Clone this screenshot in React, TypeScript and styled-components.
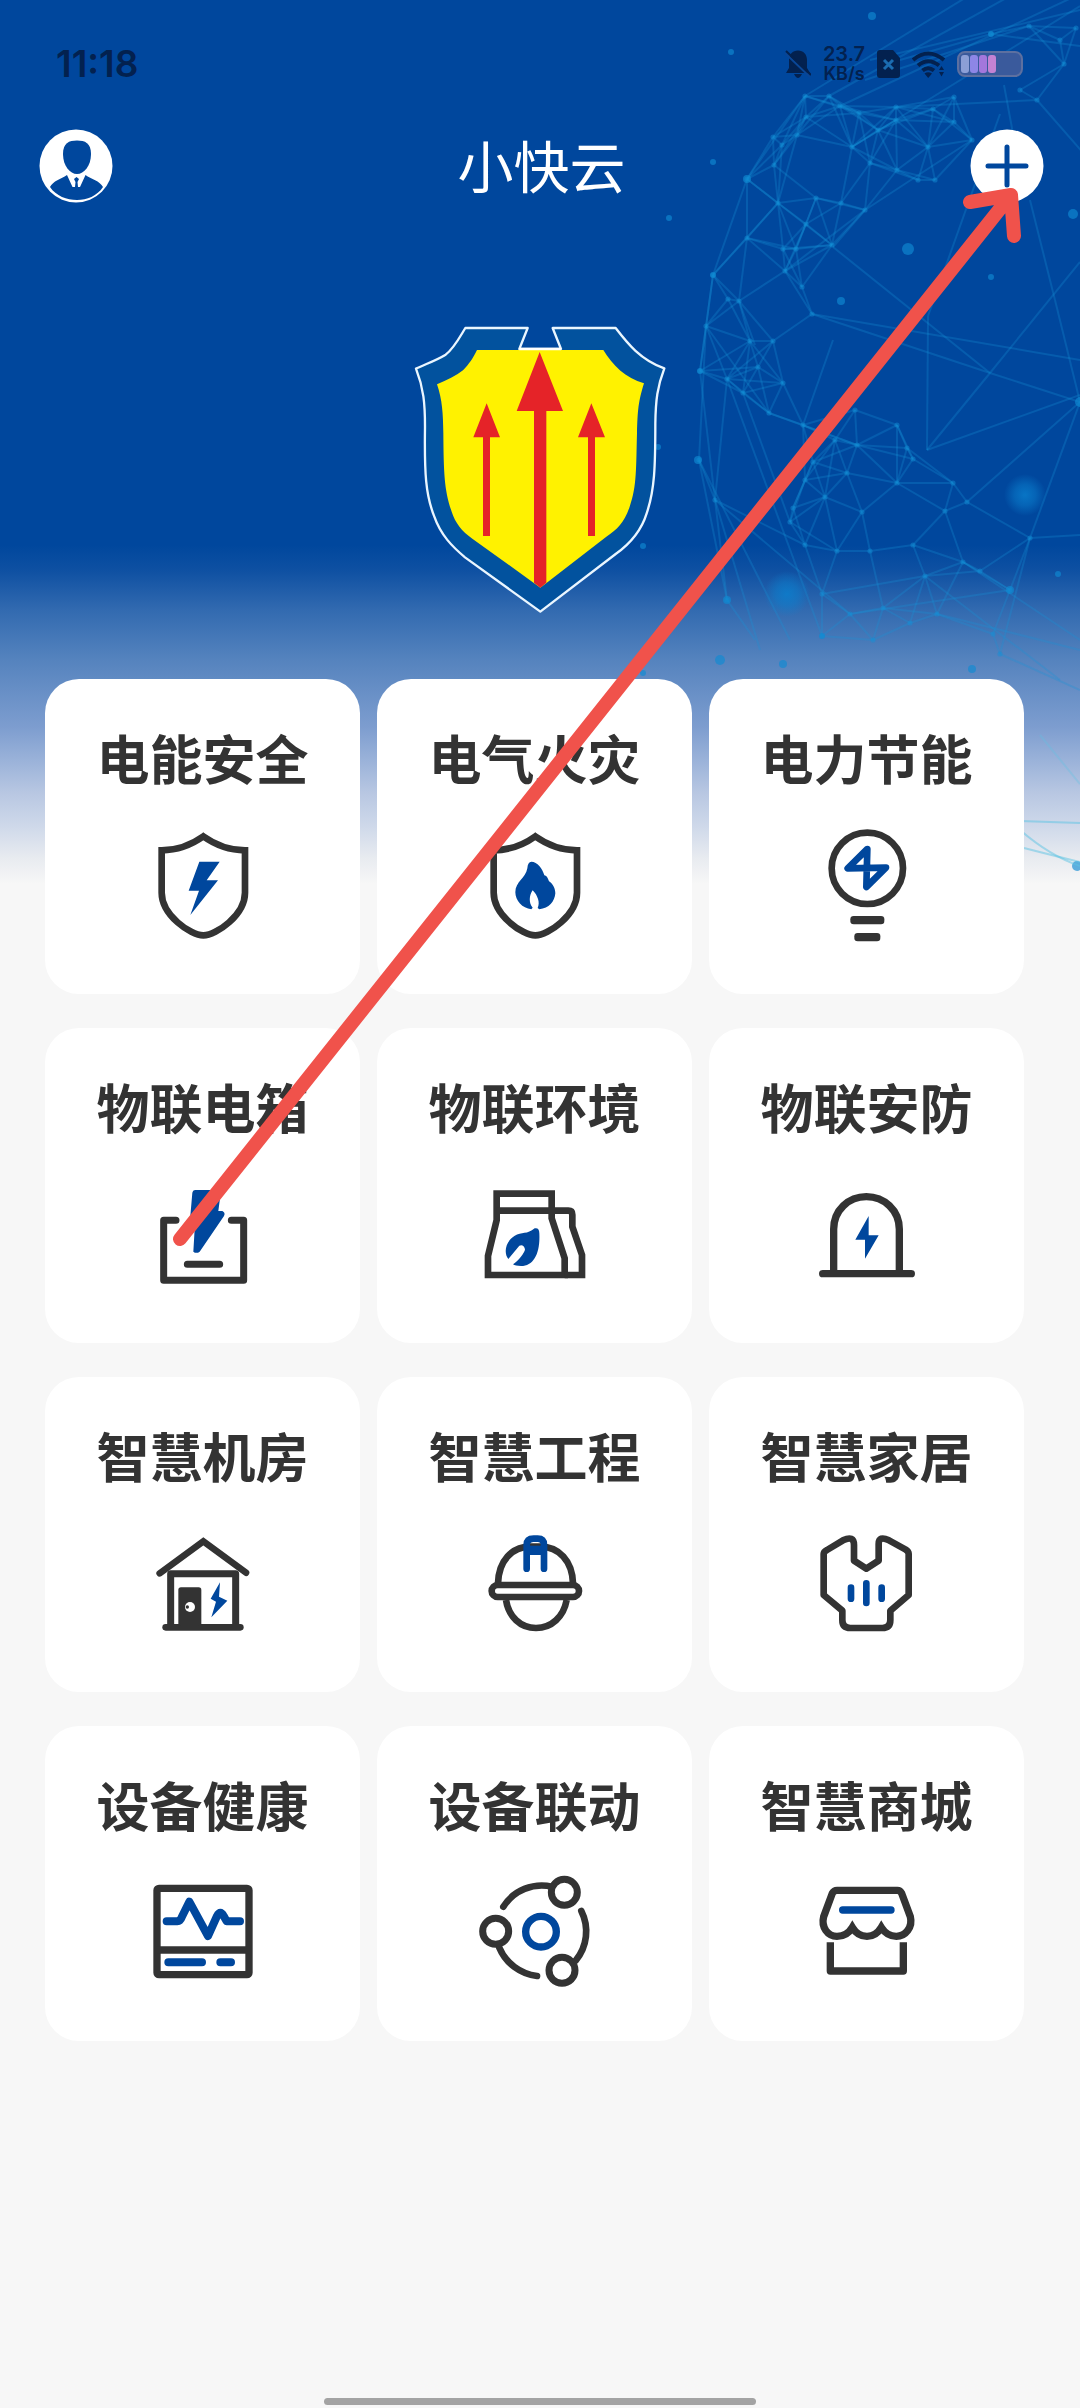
import React from "react";
import styled, { createGlobalStyle } from "styled-components";

const BLUE = "#00479d";
const INK = "#333333";
const STATUS = "#03214f";

const GlobalStyle = createGlobalStyle`
  *, *::before, *::after { box-sizing: border-box; }
  body {
    margin: 0;
    background: #f7f7f7;
    font-family: "Noto Sans CJK SC", "Noto Sans", sans-serif;
  }
  button {
    margin: 0;
    padding: 0;
    border: 0;
    background: none;
    font: inherit;
    color: inherit;
    cursor: pointer;
  }
  svg { display: block; }
`;

const Page = styled.div`
  position: relative;
  display: grid;
  min-height: 100vh;
  overflow: hidden;
  background: #f7f7f7;
`;

const Backdrop = styled.div`
  grid-area: 1 / 1;
  align-self: start;
  display: flex;
  justify-content: flex-end;
  height: 884px;
  background: linear-gradient(
    to bottom,
    ${BLUE} 0,
    ${BLUE} 545px,
    #0e50a2 570px,
    #326ab0 610px,
    #5583be 660px,
    #7d9dcf 727px,
    #9ab2d9 760px,
    #b8c7e2 793px,
    #cfd9ea 827px,
    #e8ebf0 858px,
    #f7f7f7 884px
  );
`;

const Screen = styled.main`
  grid-area: 1 / 1;
  z-index: 1;
  display: flex;
  flex-direction: column;
  min-width: 0;
`;

const StatusBar = styled.div`
  display: flex;
  align-items: center;
  justify-content: space-between;
  height: 128px;
  padding: 0 57px 0 56px;
  font-family: Inter, "Noto Sans", sans-serif;
  color: ${STATUS};
`;

const Clock = styled.time`
  font-size: 37px;
  line-height: 44px;
  font-weight: 600;
`;

const StatusItems = styled.div`
  display: flex;
  align-items: center;
  gap: 12px;
`;

const NetSpeed = styled.div`
  display: flex;
  flex-direction: column;
  align-items: center;
  width: 42px;
  font-size: 18px;
  line-height: 20px;
  font-weight: 600;
`;

const SpeedValue = styled.span`
  font-size: 20px;
`;

const Battery = styled.div`
  display: flex;
  gap: 1px;
  width: 66px;
  height: 26px;
  padding: 2px;
  border: 2px solid #5d70a0;
  border-radius: 8px;
  background: #3a5a9c;
`;

const Cell = styled.span<{ $tone: string }>`
  width: 8px;
  border-radius: 3px;
  background: ${(p) => p.$tone};
`;

const Header = styled.header`
  display: flex;
  align-items: center;
  justify-content: space-between;
  height: 76px;
  padding: 0 36px 0 39px;
`;

const Title = styled.h1`
  margin: 0;
  padding-bottom: 4px;
  font-size: 56px;
  line-height: 72px;
  font-weight: 400;
  color: #ffffff;
`;

const RoundButton = styled.button`
  display: grid;
  place-items: center;
  width: 74px;
  height: 74px;
  border-radius: 50%;
`;

const Emblem = styled.div`
  display: flex;
  justify-content: center;
  padding: 121px 0 65px;
`;

const Grid = styled.section`
  display: grid;
  grid-template-columns: repeat(3, 1fr);
  gap: 34px 17px;
  padding: 0 56px 0 45px;
`;

const Card = styled.button`
  display: flex;
  flex-direction: column;
  align-items: center;
  gap: 38px;
  padding: 49px 0 50px;
  border-radius: 34px;
  background: #ffffff;
`;

const CardLabel = styled.span`
  font-size: 53px;
  line-height: 58px;
  font-weight: 700;
  color: ${INK};
  white-space: nowrap;
`;

const HomeIndicator = styled.div`
  width: 40%;
  height: 7px;
  margin: auto auto 3px;
  border-radius: 4px;
  background: #a3a3a3;
`;

const Pointer = styled.svg`
  position: absolute;
  top: 0;
  left: 0;
  z-index: 2;
  width: 100%;
  pointer-events: none;
`;

/* ---------- network globe ---------- */

type Pt = [number, number];

const NODES: Pt[] = [
  [805, 96], [829, 96], [840, 106], [806, 117], [773, 137], [797, 135], [782, 145],
  [747, 179], [774, 165], [852, 147], [859, 113], [896, 120], [896, 107], [878, 130],
  [870, 163], [897, 170], [928, 147], [933, 109], [954, 97], [954, 122], [972, 140],
  [778, 203], [816, 198], [841, 203], [865, 210], [806, 224], [747, 238], [783, 249],
  [796, 249], [832, 245], [918, 180], [935, 180], [713, 275], [728, 299], [706, 326],
  [739, 301], [785, 271], [802, 287], [812, 314], [700, 371], [727, 379], [743, 393],
  [750, 341], [773, 341], [783, 383], [758, 367], [769, 413], [803, 425], [699, 460],
  [715, 500], [727, 600], [790, 522], [793, 508], [813, 462], [847, 473], [857, 445],
  [855, 410], [897, 425], [907, 448], [913, 459], [897, 483], [953, 483], [945, 511],
  [967, 502], [913, 545], [925, 576], [963, 562], [980, 571], [870, 551], [837, 551],
  [805, 545], [822, 594], [850, 614], [822, 636], [883, 608], [910, 623], [937, 614],
  [993, 634], [1010, 590], [1030, 538], [991, 34], [1029, 26], [1060, 40], [1020, 90],
  [1037, 100], [1064, 64], [1076, 28], [1000, 654], [873, 640], [825, 497], [862, 512],
  [835, 440], [805, 480],
];

const LONG_LINES: [Pt, Pt][] = [
  [[805, 96], [965, -2]], [[829, 96], [1010, -4]], [[840, 106], [1080, -6]],
  [[870, 60], [1080, 10]], [[900, 60], [991, 34]], [[991, 34], [1080, 46]],
  [[865, 80], [1029, 26]], [[852, 147], [1080, 6]], [[896, 107], [1037, 100]],
  [[865, 210], [972, 140]], [[833, 247], [865, 210]], [[785, 271], [865, 210]],
  [[833, 247], [990, 373]], [[812, 314], [990, 373]], [[812, 314], [1080, 360]],
  [[990, 373], [1080, 402]], [[990, 373], [1080, 262]], [[990, 373], [927, 450]],
  [[928, 316], [927, 450]], [[928, 316], [1000, 114]], [[1037, 100], [1085, 155]],
  [[1004, 85], [1016, 150]], [[1030, 200], [1055, 300]], [[1055, 300], [1080, 402]],
  [[1080, 402], [967, 502]], [[1080, 402], [1030, 538]], [[927, 450], [1080, 395]],
  [[967, 502], [1030, 538]], [[1030, 538], [1080, 535]], [[1030, 538], [1000, 654]],
  [[706, 326], [699, 460]], [[706, 326], [769, 413]], [[700, 371], [715, 500]],
  [[699, 460], [727, 600]], [[715, 500], [727, 600]], [[715, 500], [850, 614]],
  [[715, 500], [805, 545]], [[727, 379], [715, 500]], [[743, 393], [790, 522]],
  [[727, 600], [755, 640]], [[727, 379], [822, 636]], [[803, 425], [833, 340]],
  [[769, 413], [857, 445]], [[739, 301], [747, 238]], [[713, 275], [747, 179]],
  [[739, 301], [755, 345]], [[747, 179], [805, 96]], [[713, 275], [700, 371]],
  [[747, 179], [832, 245]], [[778, 203], [797, 135]], [[713, 275], [778, 203]],
  [[699, 460], [790, 640]], [[715, 500], [760, 650]], [[850, 614], [1010, 590]],
  [[822, 594], [925, 576]], [[937, 614], [1080, 650]], [[925, 576], [1060, 680]],
  [[1000, 654], [1080, 690]], [[963, 562], [1080, 640]],
];

const DOTS: [number, number, number][] = [
  [872, 16, 4], [731, 52, 3], [713, 162, 3], [669, 218, 3], [908, 249, 6],
  [1073, 214, 5], [991, 277, 3], [841, 301, 4], [658, 447, 3], [643, 546, 3],
  [698, 460, 4], [727, 600, 4], [720, 660, 5], [1058, 574, 3], [747, 179, 4],
  [1010, 590, 4], [822, 636, 3], [783, 664, 4], [972, 669, 4], [643, 673, 3],
  [1077, 866, 5], [713, 275, 3], [700, 371, 3], [1080, 402, 5], [991, 34, 3],
];

const SHORT_LINES: [Pt, Pt][] = NODES.flatMap((a, i) =>
  NODES.slice(i + 1)
    .filter((b) => Math.hypot(a[0] - b[0], a[1] - b[1]) < 60)
    .map((b): [Pt, Pt] => [a, b])
);

const Globe = () => (
  <svg width="460" height="884" viewBox="620 0 460 884" aria-hidden="true">
    <defs>
      <radialGradient id="glow">
        <stop offset="0" stopColor="#0a80cf" stopOpacity="0.8" />
        <stop offset="0.5" stopColor="#0a80cf" stopOpacity="0.5" />
        <stop offset="1" stopColor="#0a80cf" stopOpacity="0" />
      </radialGradient>
    </defs>
    <g stroke="#1592d6" strokeWidth="2" strokeOpacity="0.28">
      {[...SHORT_LINES, ...LONG_LINES].map(([a, b], i) => (
        <line key={i} x1={a[0]} y1={a[1]} x2={b[0]} y2={b[1]} />
      ))}
    </g>
    <g fill="#1390d6" fillOpacity="0.45">
      {NODES.map(([x, y], i) => (
        <circle key={i} cx={x} cy={y} r="2.6" />
      ))}
    </g>
    <g fill="#0f8bd2" fillOpacity="0.65">
      {DOTS.map(([x, y, r], i) => (
        <circle key={i} cx={x} cy={y} r={r} />
      ))}
    </g>
    <circle cx="1025" cy="495" r="21" fill="url(#glow)" />
    <circle cx="787" cy="594" r="23" fill="url(#glow)" />
    <g fill="none" stroke="#5cc4e4" strokeOpacity="0.5" strokeWidth="2">
      <path d="M1020 821 L1080 823" />
      <path d="M1020 830 Q1050 856 1080 866" />
      <path d="M1024 848 Q1055 856 1080 862" />
      <path d="M1040 735 L1080 784" strokeOpacity="0.3" />
    </g>
  </svg>
);

/* ---------- emblem ---------- */

const Shield = () => (
  <svg width="252" height="289" viewBox="75 75 756 867" role="img" aria-label="小快云">
    <path
      d="M229 84 H416 L391 147 H516 L491 84 H680 C715 130 755 180 826 205 C805 260 800 300 799 370 C799 500 797 570 773 640 C757 692 725 730 680 762 L454 935 L228 772 C190 740 155 705 136 650 C110 585 106 520 108 380 C108 310 104 265 81 206 C110 192 140 182 170 164 C195 145 210 115 229 84 Z"
      fill="#02529e"
      stroke="#eaf6ff"
      strokeWidth="7"
      strokeLinejoin="round"
    />
    <path
      d="M264 150 H643 C670 195 710 235 765 250 C748 305 746 330 744 400 C741 500 744 560 722 620 C706 668 685 688 652 710 L454 863 L250 716 C218 692 200 672 187 632 C166 570 164 520 163 400 C162 340 160 300 144 253 C175 240 200 228 222 211 C240 192 252 175 264 150 Z"
      fill="#fff200"
    />
    <path d="M391 147 H516" stroke="#ffffff" strokeWidth="7" />
    <path d="M452 156 L522 333 H472 V848 L454 863 L435 848 V333 H383 Z" fill="#e52328" />
    <path d="M293 310 L333 412 H303 V708 H282 V412 H253 Z" fill="#e52328" />
    <path d="M607 310 L648 412 H618 V708 H597 V412 H567 Z" fill="#e52328" />
  </svg>
);

/* ---------- status and header icons ---------- */

const BellOff = () => (
  <svg width="26" height="30" viewBox="0 0 26 30" aria-hidden="true">
    <path d="M13 1.500 C18.500 1.500 22 5.500 22 11 V19 L25 24 H1 L4 19 V11 C4 5.500 7.500 1.500 13 1.500 Z M9 25 H17 Q15 29 13 29 T9 25 Z" fill={STATUS} />
    <path d="M0 4 L25 28" stroke="#0a4696" strokeWidth="2" />
    <path d="M1 2 L26 26" stroke={STATUS} strokeWidth="2" />
  </svg>
);

const SimOff = () => (
  <svg width="23" height="28" viewBox="0 0 23 28" aria-hidden="true">
    <path d="M3 0 H16 L23 8 V25 Q23 28 20 28 H3 Q0 28 0 25 V3 Q0 0 3 0 Z" fill={STATUS} />
    <path d="M7 10 L16 19 M16 10 L7 19" stroke="#1b6cb0" strokeWidth="3" />
  </svg>
);

const Wifi = () => (
  <svg width="33" height="27" viewBox="0 0 33 27" aria-hidden="true">
    <g fill="none" stroke={STATUS} strokeWidth="4">
      <path d="M1 9 Q16 -4 32 9" />
      <path d="M6 14.500 Q16 6 27 14.500" />
      <path d="M10.500 19.500 Q16 15 22 19.500" />
    </g>
    <path d="M12.500 22.500 Q16 20 20 22.500 L16.200 27 Z" fill={STATUS} />
    <path d="M27 19 L29.500 15 L32 19 Z M27 21 L29.500 25.500 L32 21 Z" fill={STATUS} />
  </svg>
);

const Avatar = () => (
  <svg width="74" height="74" viewBox="0 0 74 74" aria-hidden="true">
    <circle cx="37" cy="37" r="36.500" fill="#ffffff" />
    <path
      d="M38 11.500 C46 11.500 52 14 52 25 C52 37 45 45 38 45 S24 37 24 25 C24 14 30 11.500 38 11.500 Z"
      fill={BLUE}
    />
    <path
      d="M11 58 C14 52 22 50 28 46 L33.500 58 L36 58 L36.500 53 L35 50 L37.500 48 L40 50 L38.500 53 L39 58 L41 58 L46.500 46 C52 50 61 52 64 58 C58 67 48 71 38 71 S17 67 11 58 Z"
      fill={BLUE}
    />
  </svg>
);

const Plus = () => (
  <svg width="74" height="74" viewBox="0 0 74 74" aria-hidden="true">
    <circle cx="37" cy="37" r="36.500" fill="#ffffff" />
    <path d="M18 37 H56 M37 18 V56" stroke={BLUE} strokeWidth="5" strokeLinecap="round" />
  </svg>
);

/* ---------- module icons ---------- */

const ModuleIcon = ({ origin, children }: { origin: string; children: React.ReactNode }) => (
  <svg
    width="120"
    height="120"
    viewBox={`${origin} 360 360`}
    fill="none"
    stroke={INK}
    strokeWidth="20"
    aria-hidden="true"
  >
    {children}
  </svg>
);

const guard = "M519 529 Q462 570 394 571 V698 C394 765 480 826 519 826 S644 765 644 698 V571 Q576 570 519 529 Z";

const icons = {
  safety: (
    <ModuleIcon origin="338 492">
      <path d={guard} />
      <path d="M507 605 H568 L529 661 H563 L480 765 L506 692 H475 Z" fill={BLUE} stroke="none" />
    </ModuleIcon>
  ),
  fire: (
    <ModuleIcon origin="338 492">
      <path d={guard} />
      <path
        d="M507 605 C525 605 540 625 546 646 C552 646 556 652 560 664 C572 672 579 685 579 700 C577 725 560 745 531 748 L526 744 C534 728 526 706 511 691 C500 706 499 730 511 743 L507 748 C480 745 459 722 459 697 C459 665 490 655 495 625 C496 612 500 605 507 605 Z"
        fill={BLUE}
        stroke="none"
      />
    </ModuleIcon>
  ),
  bulb: (
    <ModuleIcon origin="800 492">
      <circle cx="981" cy="625" r="107" />
      <path d="M981 567 L922 625 L1037 623 L978 681 Z" stroke={BLUE} strokeLinejoin="round" />
      <rect x="930" y="768" width="102" height="25" rx="10" fill={INK} stroke="none" />
      <rect x="942" y="819" width="78" height="25" rx="10" fill={INK} stroke="none" />
    </ModuleIcon>
  ),
  box: (
    <ModuleIcon origin="338 459">
      <path d="M437 601 H400 V781 H640 V601 H603 M471 733 H568" strokeLinecap="round" strokeLinejoin="round" strokeWidth="21" />
      <path
        d="M494 510 H565 Q573 511 571 520 L564 573 H576 Q586 578 581 588 L508 695 Q498 702 489 695 L494 610 H486 Q478 608 479 600 L486 518 Q487 511 494 510 Z"
        fill={BLUE}
        stroke="none"
      />
    </ModuleIcon>
  ),
  environment: (
    <ModuleIcon origin="1334 459">
      <path d="M1399 521 H1564 V595 L1603 715 V765 H1373 V708 L1399 600 Z" />
      <path d="M1399 572 H1614 Q1626 572 1626 584 V620 L1655 705 V765 H1603" />
      <path
        d="M1513 625 Q1527 622 1527 640 C1530 700 1510 738 1472 738 Q1455 738 1448 733 C1462 725 1484 698 1484 688 Q1480 672 1467 677 L1434 717 C1420 700 1424 665 1452 648 C1475 634 1490 645 1513 625 Z"
        fill={BLUE}
        stroke="none"
      />
    </ModuleIcon>
  ),
  security: (
    <ModuleIcon origin="800 459">
      <path d="M880 760 V628 C880 570 925 530 978 530 S1077 570 1077 628 V760" strokeWidth="22" />
      <path d="M847 761 H1113" strokeWidth="22" strokeLinecap="round" />
      <path d="M985 588 L945 659 H974 V716 L1015 646 H985 Z" fill={BLUE} stroke="none" />
    </ModuleIcon>
  ),
  room: (
    <ModuleIcon origin="338 456">
      <path d="M388 610 L519 514 L647 608" strokeLinecap="round" />
      <path d="M421 768 V611 H616 V768" strokeWidth="21" strokeLinejoin="round" />
      <path d="M406 772 H630" strokeLinecap="round" />
      <rect x="444" y="652" width="69" height="116" rx="8" fill={INK} stroke="none" />
      <circle cx="479" cy="711" r="15" fill="#ffffff" stroke="none" />
      <circle cx="471" cy="711" r="5" fill={INK} stroke="none" />
      <path d="M569 637 L541 686 L557 695 L543 742 L591 692 L566 680 Z" fill={BLUE} stroke="none" />
    </ModuleIcon>
  ),
  helmet: (
    <ModuleIcon origin="1334 456">
      <path d="M1403 640 C1405 572 1445 530 1500 530 H1530 C1585 530 1626 572 1628 640" />
      <rect x="1384" y="645" width="262" height="36" rx="18" />
      <path d="M1427 690 C1435 740 1470 774 1517 774 S1600 740 1609 690" />
      <rect x="1498" y="527" width="35" height="28" fill={BLUE} stroke="none" />
      <path
        d="M1489 596 V525 Q1489 506 1510 506 H1522 Q1541 506 1541 525 V596"
        stroke={BLUE}
        strokeLinecap="round"
      />
    </ModuleIcon>
  ),
  vest: (
    <ModuleIcon origin="800 456">
      <path
        d="M860 540 L908 511 Q941 495 941 525 V572 L978 596 L1015 572 V522 Q1015 496 1046 511 L1095 538 Q1105 544 1105 552 V675 L1050 722 V750 Q1050 774 1026 774 H930 Q906 774 906 750 V722 L850 675 V552 Q850 545 860 540 Z"
        strokeLinejoin="round"
      />
      <path d="M932 653 V686 M978 640 V699 M1024 653 V686" stroke={BLUE} strokeLinecap="round" />
    </ModuleIcon>
  ),
  health: (
    <ModuleIcon origin="338 453">
      <rect x="380" y="505" width="276" height="259" rx="6" strokeWidth="22" />
      <path d="M380 690 H656" strokeWidth="22" />
      <g stroke={BLUE} strokeWidth="24" strokeLinecap="round" strokeLinejoin="round">
        <path d="M409 604 H440 Q450 603 454 592 L477 545 L533 648 L560 588 Q570 568 580 588 L589 604 H629" />
        <path d="M414 727 H515 M570 727 H602" />
      </g>
    </ModuleIcon>
  ),
  linkage: (
    <ModuleIcon origin="1334 453">
      <circle cx="1532" cy="635" r="46" stroke={BLUE} strokeWidth="22" />
      <g strokeWidth="21">
        <circle cx="1396" cy="634" r="39" />
        <circle cx="1602" cy="517" r="39" />
        <circle cx="1595" cy="751" r="39" />
      </g>
      <g strokeLinecap="round">
        <path d="M1419 560 A137 137 0 0 1 1565 500" />
        <path d="M1653 573 A137 137 0 0 1 1636 722" />
        <path d="M1407 683 A140 140 0 0 0 1520 768" />
      </g>
    </ModuleIcon>
  ),
  store: (
    <ModuleIcon origin="800 453">
      <path
        d="M890 511 H1071 Q1080 511 1084 520 L1110 590 C1118 622 1095 649 1068 649 Q1040 649 1023 622 Q1007 649 980 649 Q952 649 936 622 Q920 649 890 649 C862 649 842 622 850 590 L876 520 Q881 511 890 511 Z"
        strokeWidth="22"
      />
      <path d="M907 570 H1052" stroke={BLUE} strokeWidth="22" strokeLinecap="round" />
      <path d="M870 667 V753 H1089 V667" strokeWidth="22" strokeLinejoin="round" />
    </ModuleIcon>
  ),
};

const modules: { label: string; icon: keyof typeof icons }[] = [
  { label: "电能安全", icon: "safety" },
  { label: "电气火灾", icon: "fire" },
  { label: "电力节能", icon: "bulb" },
  { label: "物联电箱", icon: "box" },
  { label: "物联环境", icon: "environment" },
  { label: "物联安防", icon: "security" },
  { label: "智慧机房", icon: "room" },
  { label: "智慧工程", icon: "helmet" },
  { label: "智慧家居", icon: "vest" },
  { label: "设备健康", icon: "health" },
  { label: "设备联动", icon: "linkage" },
  { label: "智慧商城", icon: "store" },
];

const batteryTones = ["#8c9fd6", "#8d86e6", "#a377dc", "#c382d3"];

export default function App() {
  return (
    <Page lang="zh-CN">
      <GlobalStyle />
      <Backdrop>
        <Globe />
      </Backdrop>
      <Screen>
        <StatusBar>
          <Clock>11:18</Clock>
          <StatusItems>
            <BellOff />
            <NetSpeed>
              <SpeedValue>23.7</SpeedValue>
              <span>KB/s</span>
            </NetSpeed>
            <SimOff />
            <Wifi />
            <Battery>
              {batteryTones.map((tone) => (
                <Cell key={tone} $tone={tone} />
              ))}
            </Battery>
          </StatusItems>
        </StatusBar>
        <Header>
          <RoundButton type="button" aria-label="个人中心">
            <Avatar />
          </RoundButton>
          <Title>小快云</Title>
          <RoundButton type="button" aria-label="添加">
            <Plus />
          </RoundButton>
        </Header>
        <Emblem>
          <Shield />
        </Emblem>
        <Grid>
          {modules.map((m) => (
            <Card key={m.label} type="button">
              <CardLabel>{m.label}</CardLabel>
              {icons[m.icon]}
            </Card>
          ))}
        </Grid>
        <HomeIndicator />
      </Screen>
      <Pointer viewBox="0 0 1080 1300" aria-hidden="true">
        <path
          d="M180 1239 L1011 195 M970 202 L1011 195 L1014 236"
          fill="none"
          stroke="#f0524b"
          strokeWidth="14"
          strokeLinecap="round"
          strokeLinejoin="round"
        />
      </Pointer>
    </Page>
  );
}
